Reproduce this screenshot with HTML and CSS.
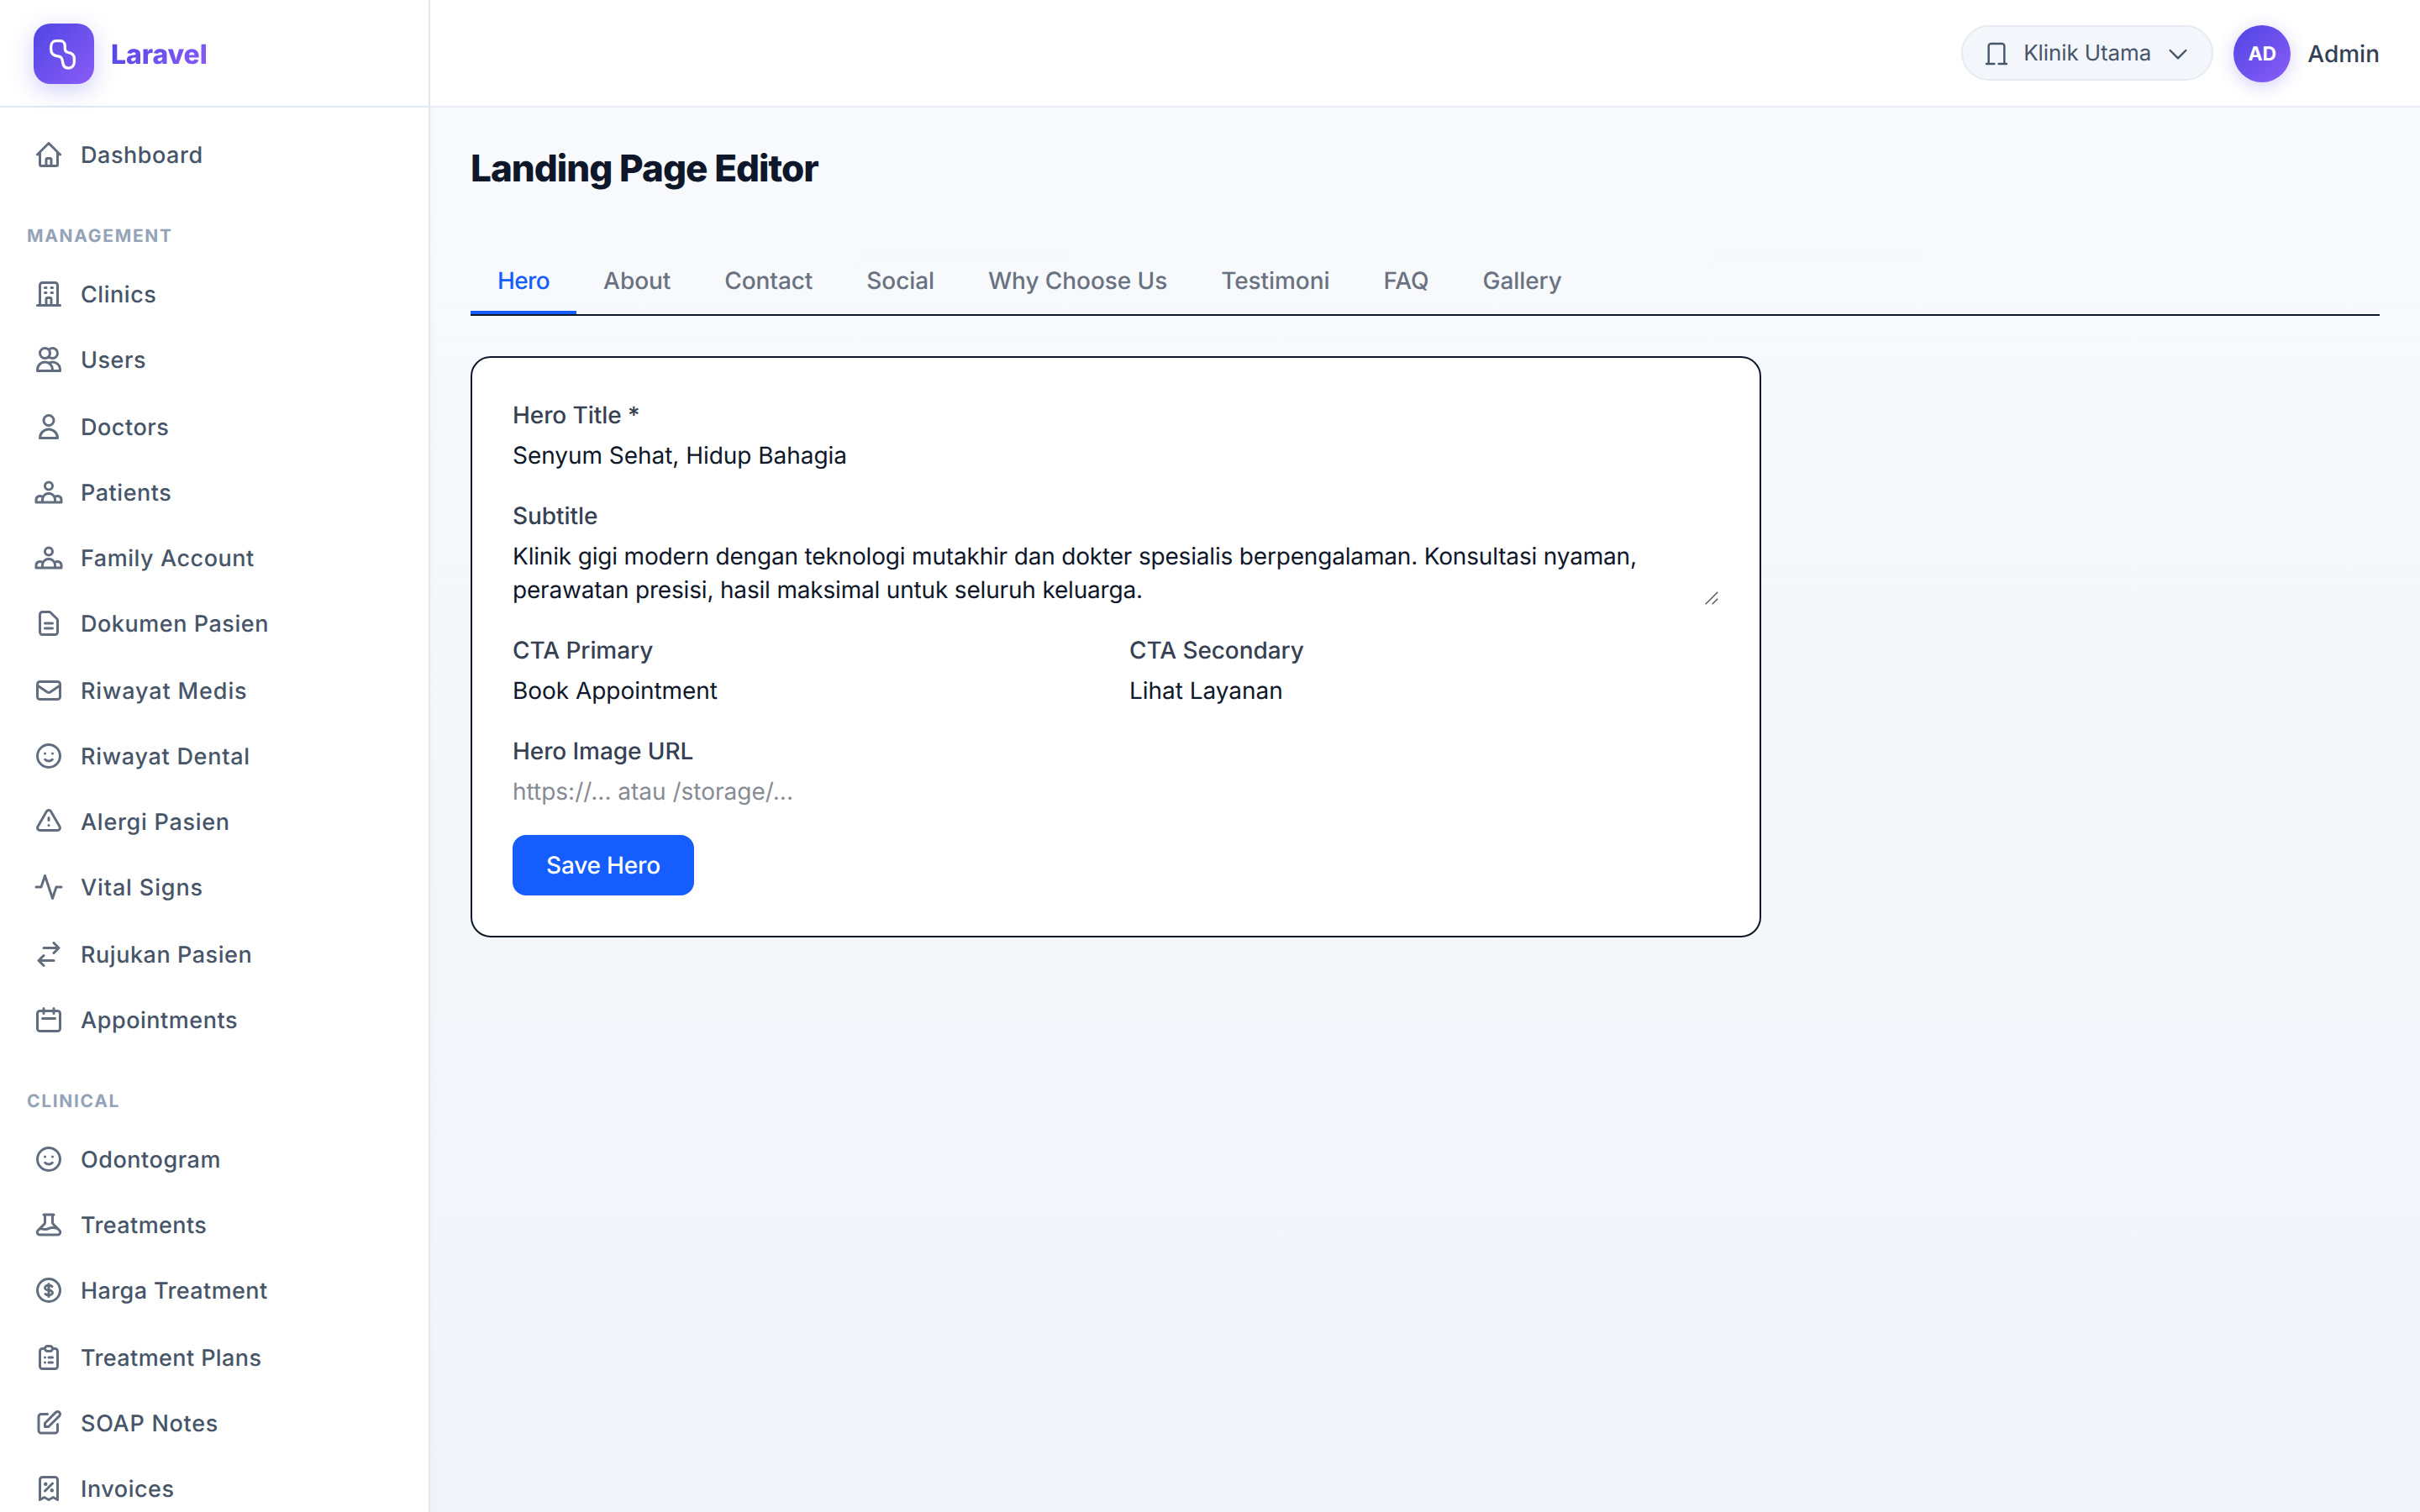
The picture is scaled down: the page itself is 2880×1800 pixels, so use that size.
FILE: index.html
```html
<!DOCTYPE html>
<html lang="id">
<head>
<meta charset="utf-8">
<title>Landing Page Editor</title>
<link rel="stylesheet" href="styles.css">
</head>
<body>
<div class="app">
  <aside class="sidebar">
    <div class="brand">
      <span class="brand-mark"><svg viewBox="0 0 72 72"><path d="M27 20.7h4.5c3.6 0 5.8 2.4 5.8 6v3c0 3 .8 4.2 3.6 4.6 4.8.5 7.5 3.4 7.5 8v3c0 4.6-2.8 7.8-6.8 7.8-4 0-6.6-2.6-7-7.2-.4-4.2-1.4-6.4-4.6-6.8-5.4-.6-9.3-3.4-9.3-8.2v-3.4c0-4.2 2.5-6.8 6.3-6.8z"/></svg></span>
      <span class="brand-name">Laravel</span>
    </div>
    <nav class="nav">
      <ul class="nav-list">
        <li class="nav-item"><svg class="icon" viewBox="0 0 24 24"><path d="M3 12l2-2m0 0l7-7 7 7M5 10v10a1 1 0 001 1h3m10-11l2 2m-2-2v10a1 1 0 01-1 1h-3m-6 0a1 1 0 001-1v-4a1 1 0 011-1h2a1 1 0 011 1v4a1 1 0 001 1m-6 0h6"/></svg><span>Dashboard</span></li>
      </ul>
      <h2 class="nav-label">Management</h2>
      <ul class="nav-list management">
        <li class="nav-item"><svg class="icon" viewBox="0 0 24 24"><path d="M19 21V5a2 2 0 00-2-2H7a2 2 0 00-2 2v16m14 0h2m-2 0h-5m-9 0H3m2 0h5M9 7h1m-1 4h1m4-4h1m-1 4h1m-5 10v-5a1 1 0 011-1h2a1 1 0 011 1v5m-4 0h4"/></svg><span>Clinics</span></li>
        <li class="nav-item"><svg class="icon" viewBox="0 0 24 24"><path d="M12 4.354a4 4 0 110 5.292M15 21H3v-1a6 6 0 0112 0v1zm0 0h6v-1a6 6 0 00-9-5.197M13 7a4 4 0 11-8 0 4 4 0 018 0z"/></svg><span>Users</span></li>
        <li class="nav-item"><svg class="icon" viewBox="0 0 24 24"><path d="M16 7a4 4 0 11-8 0 4 4 0 018 0zM12 14a7 7 0 00-7 7h14a7 7 0 00-7-7z"/></svg><span>Doctors</span></li>
        <li class="nav-item"><svg class="icon" viewBox="0 0 24 24"><path d="M17 20h5v-2a3 3 0 00-5.356-1.857M17 20H7m10 0v-2c0-.656-.126-1.283-.356-1.857M7 20H2v-2a3 3 0 015.356-1.857M7 20v-2c0-.656.126-1.283.356-1.857m0 0a5.002 5.002 0 019.288 0M15 7a3 3 0 11-6 0 3 3 0 016 0z"/></svg><span>Patients</span></li>
        <li class="nav-item"><svg class="icon" viewBox="0 0 24 24"><path d="M17 20h5v-2a3 3 0 00-5.356-1.857M17 20H7m10 0v-2c0-.656-.126-1.283-.356-1.857M7 20H2v-2a3 3 0 015.356-1.857M7 20v-2c0-.656.126-1.283.356-1.857m0 0a5.002 5.002 0 019.288 0M15 7a3 3 0 11-6 0 3 3 0 016 0z"/></svg><span>Family Account</span></li>
        <li class="nav-item"><svg class="icon" viewBox="0 0 24 24"><path d="M9 12h6m-6 4h6m2 5H7a2 2 0 01-2-2V5a2 2 0 012-2h5.586a1 1 0 01.707.293l5.414 5.414a1 1 0 01.293.707V19a2 2 0 01-2 2z"/></svg><span>Dokumen Pasien</span></li>
        <li class="nav-item wide"><svg class="icon" viewBox="0 0 24 24"><path d="M3 8l7.89 5.26a2 2 0 002.22 0L21 8M5 19h14a2 2 0 002-2V7a2 2 0 00-2-2H5a2 2 0 00-2 2v10a2 2 0 002 2z"/></svg><span>Riwayat Medis</span></li>
        <li class="nav-item loose"><svg class="icon" viewBox="0 0 24 24"><path d="M14.828 14.828a4 4 0 01-5.656 0M9 10h.01M15 10h.01M21 12a9 9 0 11-18 0 9 9 0 0118 0z"/></svg><span>Riwayat Dental</span></li>
        <li class="nav-item loose"><svg class="icon" viewBox="0 0 24 24"><path d="M12 9v2m0 4h.01m-6.938 4h13.856c1.54 0 2.502-1.667 1.732-3L13.732 4c-.77-1.333-2.694-1.333-3.464 0L3.34 16c-.77 1.333.192 3 1.732 3z"/></svg><span>Alergi Pasien</span></li>
        <li class="nav-item wide"><svg class="icon" viewBox="0 0 24 24"><path d="M22 12h-4l-3 9L9 3l-3 9H2"/></svg><span>Vital Signs</span></li>
        <li class="nav-item"><svg class="icon" viewBox="0 0 24 24"><path d="M8 7h12m0 0l-4-4m4 4l-4 4m0 6H4m0 0l4 4m-4-4l4-4"/></svg><span>Rujukan Pasien</span></li>
        <li class="nav-item"><svg class="icon" viewBox="0 0 24 24"><path d="M8 7V3m8 4V3M7 11h10M5 21h14a2 2 0 002-2V7a2 2 0 00-2-2H5a2 2 0 00-2 2v12a2 2 0 002 2z"/></svg><span>Appointments</span></li>
      </ul>
      <h2 class="nav-label">Clinical</h2>
      <ul class="nav-list clinical">
        <li class="nav-item"><svg class="icon" viewBox="0 0 24 24"><path d="M14.828 14.828a4 4 0 01-5.656 0M9 10h.01M15 10h.01M21 12a9 9 0 11-18 0 9 9 0 0118 0z"/></svg><span>Odontogram</span></li>
        <li class="nav-item tight"><svg class="icon" viewBox="0 0 24 24"><path d="M19.428 15.428a2 2 0 00-1.022-.547l-2.387-.477a6 6 0 00-3.86.517l-.318.158a6 6 0 01-3.86.517L6.05 15.21a2 2 0 00-1.806.547M8 4h8l-1 1v5.172a2 2 0 00.586 1.414l5 5c1.26 1.26.367 3.414-1.415 3.414H4.828c-1.782 0-2.674-2.154-1.414-3.414l5-5A2 2 0 009 10.172V5L8 4z"/></svg><span>Treatments</span></li>
        <li class="nav-item tight"><svg class="icon" viewBox="0 0 24 24"><path d="M12 8c-1.657 0-3 .895-3 2s1.343 2 3 2 3 .895 3 2-1.343 2-3 2m0-8c1.11 0 2.08.402 2.599 1M12 8V7m0 1v8m0 0v1m0-1c-1.11 0-2.08-.402-2.599-1M21 12a9 9 0 11-18 0 9 9 0 0118 0z"/></svg><span>Harga Treatment</span></li>
        <li class="nav-item tight"><svg class="icon" viewBox="0 0 24 24"><path d="M9 5H7a2 2 0 00-2 2v12a2 2 0 002 2h10a2 2 0 002-2V7a2 2 0 00-2-2h-2M9 5a2 2 0 002 2h2a2 2 0 002-2M9 5a2 2 0 012-2h2a2 2 0 012 2m-3 7h3m-3 4h3m-6-4h.01M9 16h.01"/></svg><span>Treatment Plans</span></li>
        <li class="nav-item loose"><svg class="icon" viewBox="0 0 24 24"><path d="M11 5H6a2 2 0 00-2 2v11a2 2 0 002 2h11a2 2 0 002-2v-5m-1.414-9.414a2 2 0 112.828 2.828L11.828 15H9v-2.828l8.586-8.586z"/></svg><span>SOAP Notes</span></li>
        <li class="nav-item"><svg class="icon" viewBox="0 0 24 24"><path d="M9 14l6-6m-5.5.5h.01m4.99 5h.01M19 21V5a2 2 0 00-2-2H7a2 2 0 00-2 2v16l3.5-2 3.5 2 3.5-2 3.5 2zM10 8.5a.5.5 0 11-1 0 .5.5 0 011 0zm5 5a.5.5 0 11-1 0 .5.5 0 011 0z"/></svg><span>Invoices</span></li>
      </ul>
    </nav>
  </aside>

  <div class="page">
    <header class="topbar">
      <div class="clinic-switch">
        <svg class="icon" viewBox="0 0 24 24"><path d="M19 21V5a2 2 0 00-2-2H7a2 2 0 00-2 2v16m14 0h2m-2 0h-5m-9 0H3m2 0h5"/></svg>
        <span>Klinik Utama</span>
        <svg class="icon" viewBox="0 0 24 24"><path d="M19 9l-7 7-7-7"/></svg>
      </div>
      <div class="user">
        <span class="avatar">AD</span>
        <span class="user-name">Admin</span>
      </div>
    </header>

    <main class="content">
      <h1 class="title">Landing Page Editor</h1>
      <div class="tabs">
        <span class="tab active">Hero</span>
        <span class="tab">About</span>
        <span class="tab">Contact</span>
        <span class="tab">Social</span>
        <span class="tab">Why Choose Us</span>
        <span class="tab">Testimoni</span>
        <span class="tab">FAQ</span>
        <span class="tab">Gallery</span>
      </div>

      <section class="card">
        <div class="field">
          <div class="label">Hero Title *</div>
          <div class="value">Senyum Sehat, Hidup Bahagia</div>
        </div>
        <div class="field">
          <div class="label">Subtitle</div>
          <div class="value multiline">Klinik gigi modern dengan teknologi mutakhir dan dokter spesialis berpengalaman. Konsultasi nyaman, perawatan presisi, hasil maksimal untuk seluruh keluarga.<svg class="grip" viewBox="0 0 16 16"><path d="M.7 15.3L15.3.7M8.7 15.3l6.6-6.6"/></svg></div>
        </div>
        <div class="field-row">
          <div class="field">
            <div class="label">CTA Primary</div>
            <div class="value">Book Appointment</div>
          </div>
          <div class="field">
            <div class="label">CTA Secondary</div>
            <div class="value">Lihat Layanan</div>
          </div>
        </div>
        <div class="field">
          <div class="label">Hero Image URL</div>
          <div class="value placeholder">https://... atau /storage/...</div>
        </div>
        <button class="save" type="button">Save Hero</button>
      </section>
    </main>
  </div>
</div>
</body>
</html>
```
FILE: styles.css
```css
* { box-sizing: border-box; margin: 0; padding: 0; }

body {
  font-family: Inter, "Liberation Sans", sans-serif;
  font-size: 28px;
  line-height: 40px;
  color: #0f172a;
  background: #f8fafc;
  overflow: hidden;
  text-rendering: geometricPrecision;
}

.app {
  display: flex;
  height: 1800px;
  background: linear-gradient(180deg, #f8fafc 0%, #f1f5f9 100%);
}

.icon {
  flex: none;
  fill: none;
  stroke: currentColor;
  stroke-width: 2;
  stroke-linecap: round;
  stroke-linejoin: round;
}

/* Sidebar */
.sidebar {
  flex: none;
  width: 512px;
  height: 1800px;
  overflow: hidden;
  background: #fff;
  border-right: 2px solid #e2e8f0;
  box-shadow: 2px 0 12px rgba(15, 23, 42, .02);
}

.brand {
  display: flex;
  align-items: center;
  gap: 20px;
  height: 128px;
  padding: 0 40px;
  border-bottom: 2px solid #e2e8f0;
}

.brand-mark {
  width: 72px;
  height: 72px;
  margin-top: 2px;
  border-radius: 20px;
  background: linear-gradient(135deg, #4f46e5, #8b5cf6);
  box-shadow: 0 8px 28px rgba(79, 70, 229, .25);
}

.brand-mark svg {
  display: block;
  fill: none;
  stroke: #fff;
  stroke-width: 3.3;
  stroke-linejoin: round;
}

.brand-name {
  margin-top: 4px;
  font-size: 32px;
  font-weight: 800;
  letter-spacing: -.1px;
  background: linear-gradient(135deg, #4f46e5, #8b5cf6);
  -webkit-background-clip: text;
  background-clip: text;
  color: transparent;
}

.nav { padding-top: 19px; }

.nav-label {
  height: 32px;
  margin: 43px 0 17px;
  padding: 2px 0 0 32px;
  font-size: 21px;
  line-height: 32px;
  font-weight: 700;
  letter-spacing: .08em;
  text-transform: uppercase;
  color: #94a3b8;
}

.nav-list {
  display: flex;
  flex-direction: column;
  gap: 4px;
  list-style: none;
}

.nav-item {
  display: flex;
  align-items: center;
  gap: 20px;
  height: 74px;
  padding: 0 40px;
  font-size: 27px;
  font-weight: 500;
  letter-spacing: .02em;
  color: #475569;
}

.nav-item.tight { letter-spacing: .4px; }
.nav-item.loose { letter-spacing: .72px; }
.nav-item.wide { letter-spacing: .87px; }

.nav-item span { padding-top: 2px; }

.nav-item .icon {
  width: 36px;
  height: 36px;
  opacity: .85;
}

.management .nav-item:nth-child(4n+3),
.clinical .nav-item:nth-child(4n+4) { margin-top: 2px; }

/* Top bar */
.page { flex: 1; min-width: 0; }

.topbar {
  display: flex;
  justify-content: flex-end;
  align-items: flex-start;
  gap: 24px;
  height: 128px;
  padding: 30px 48px 0;
  background: #fff;
  border-bottom: 2px solid #e9eef4;
}

.clinic-switch {
  display: flex;
  align-items: center;
  gap: 16px;
  height: 66px;
  padding: 0 24px;
  border: 2px solid #e6ebf1;
  border-radius: 33px;
  background: #f3f6fb;
  font-size: 26px;
  font-weight: 400;
  letter-spacing: -.1px;
  color: #475569;
}

.clinic-switch span { padding-top: 1px; }

.clinic-switch .icon {
  width: 32px;
  height: 32px;
  margin-top: 2px;
  stroke-width: 1.8;
}

.user { display: flex; align-items: center; gap: 20px; }

.avatar {
  width: 68px;
  height: 68px;
  border-radius: 50%;
  background: linear-gradient(135deg, #4f46e5, #8b5cf6);
  box-shadow: 0 4px 20px rgba(79, 70, 229, .25);
  color: #fff;
  font-size: 23px;
  font-weight: 700;
  line-height: 68px;
  text-align: center;
}

.user-name { font-weight: 500; color: #334155; }

/* Content */
.content { padding: 48px; }

.title {
  font-size: 44px;
  line-height: 48px;
  font-weight: 800;
  letter-spacing: -.98px;
}

.tabs {
  display: flex;
  margin: 74px 0 48px;
  border-bottom: 2px solid #0f172a;
}

.tab {
  padding: 16px 32px;
  border-bottom: 4px solid transparent;
  font-weight: 500;
  letter-spacing: -.07px;
  color: #6a7282;
}

.tab.active {
  letter-spacing: -.6px;
  color: #155dfc;
  border-color: #155dfc;
}

.card {
  display: flex;
  flex-direction: column;
  align-items: stretch;
  gap: 32px;
  width: 1536px;
  padding: 48px;
  border: 2px solid #0f172a;
  border-radius: 24px;
  background: #fff;
}

.field { display: flex; flex-direction: column; gap: 8px; }

.field-row { display: grid; grid-template-columns: 1fr 1fr; gap: 32px; }

.label { font-weight: 500; letter-spacing: -.08px; color: #364153; }

.value { letter-spacing: -.04px; }

.multiline { position: relative; letter-spacing: -.18px; }

.grip {
  position: absolute;
  right: 1px;
  bottom: 2px;
  width: 16px;
  height: 16px;
  fill: none;
  stroke: #555;
  stroke-width: 1.4;
}

.placeholder { letter-spacing: 0; color: #878b94; }

.save {
  align-self: flex-start;
  height: 72px;
  padding: 0 40px;
  border: 0;
  border-radius: 16px;
  background: #155dfc;
  color: #fff;
  font: 500 28px/40px Inter, "Liberation Sans", sans-serif;
  letter-spacing: -.18px;
  text-rendering: inherit;
}
```
